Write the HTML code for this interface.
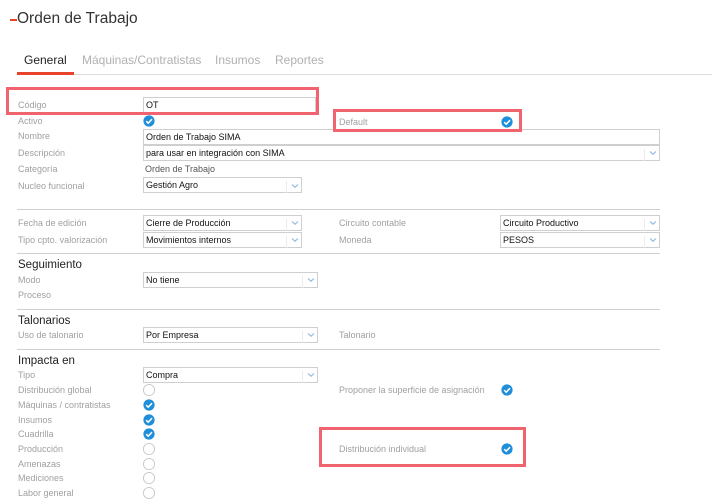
<!DOCTYPE html>
<html><head><meta charset="utf-8"><style>
*{margin:0;padding:0;box-sizing:border-box}
body{width:712px;height:502px;background:#fff;position:relative;overflow:hidden;font-family:"Liberation Sans",sans-serif}
.a{position:absolute;white-space:nowrap}
.l{position:absolute;font-size:9px;color:#a0a0a0;line-height:12px;white-space:nowrap}
.i{position:absolute;border:1px solid #cfcfcf;font-size:9px;color:#111;line-height:14px;padding-left:2px;height:16px;background:#fff;white-space:nowrap}
.s::after{content:"";position:absolute;right:0;top:3px;width:14px;height:12px;border-left:1px solid #ececec}
.h{position:absolute;font-size:11.5px;color:#222;white-space:nowrap}
.sep{position:absolute;left:17px;width:643px;height:1px;background:#d0d0d0}
.rb{position:absolute;border:3px solid #f0636f}
</style></head><body>
<div class="a" style="left:10px;top:19px;width:7px;height:2px;background:#e8442c"></div>
<div class="a" style="left:17px;top:10px;font-size:15.5px;color:#333">Orden de Trabajo</div>

<div class="a" style="left:24px;top:53px;font-size:12px;color:#222">General</div>
<div class="a" style="left:82px;top:53px;font-size:12px;color:#b0b0b0">Máquinas/Contratistas</div>
<div class="a" style="left:215px;top:53px;font-size:12px;color:#b0b0b0">Insumos</div>
<div class="a" style="left:275px;top:53px;font-size:12px;color:#b0b0b0">Reportes</div>
<div class="a" style="left:17px;top:74px;width:695px;height:1px;background:#ddd"></div>
<div class="a" style="left:17px;top:72px;width:57px;height:3px;background:#e8442c"></div>

<div class="l" style="left:18px;top:99px">Código</div>
<div class="i" style="left:143px;top:97px;width:173px">OT</div>
<div class="l" style="left:18px;top:115px">Activo</div>
<div class="l" style="left:339px;top:116px">Default</div>
<div class="l" style="left:18px;top:130px">Nombre</div>
<div class="i" style="left:143px;top:129px;width:517px">Orden de Trabajo SIMA</div>
<div class="l" style="left:18px;top:147px">Descripción</div>
<div class="i s" style="left:143px;top:145px;width:517px">para usar en integración con SIMA</div>
<div class="l" style="left:18px;top:163px">Categoría</div>
<div class="a" style="left:145px;top:163px;font-size:9px;color:#555;line-height:12px">Orden de Trabajo</div>
<div class="l" style="left:18px;top:180px">Nucleo funcional</div>
<div class="i s" style="left:143px;top:177px;width:159px">Gestión Agro</div>

<div class="sep" style="top:209px"></div>
<div class="l" style="left:18px;top:217px">Fecha de edición</div>
<div class="i s" style="left:143px;top:215px;width:159px">Cierre de Producción</div>
<div class="l" style="left:339px;top:217px">Circuito contable</div>
<div class="i s" style="left:500px;top:215px;width:160px">Circuito Productivo</div>
<div class="l" style="left:18px;top:234px">Tipo cpto. valorización</div>
<div class="i s" style="left:143px;top:232px;width:159px">Movimientos internos</div>
<div class="l" style="left:339px;top:234px">Moneda</div>
<div class="i s" style="left:500px;top:232px;width:160px">PESOS</div>

<div class="sep" style="top:253px"></div>
<div class="h" style="left:18px;top:259px">Seguimiento</div>
<div class="l" style="left:18px;top:274px">Modo</div>
<div class="i s" style="left:143px;top:272px;width:175px">No tiene</div>
<div class="l" style="left:18px;top:289px">Proceso</div>

<div class="sep" style="top:309px"></div>
<div class="h" style="left:18px;top:315px">Talonarios</div>
<div class="l" style="left:18px;top:329px">Uso de talonario</div>
<div class="i s" style="left:143px;top:327px;width:175px">Por Empresa</div>
<div class="l" style="left:339px;top:329px">Talonario</div>

<div class="sep" style="top:349px"></div>
<div class="h" style="left:18px;top:355px">Impacta en</div>
<div class="l" style="left:18px;top:369px">Tipo</div>
<div class="i s" style="left:143px;top:367px;width:175px">Compra</div>
<div class="l" style="left:18px;top:384px">Distribución global</div>
<div class="l" style="left:339px;top:384px">Proponer la superficie de asignación</div>
<div class="l" style="left:18px;top:399px">Máquinas / contratistas</div>
<div class="l" style="left:18px;top:414px">Insumos</div>
<div class="l" style="left:18px;top:428px">Cuadrilla</div>
<div class="l" style="left:18px;top:443px">Producción</div>
<div class="l" style="left:339px;top:443px">Distribución individual</div>
<div class="l" style="left:18px;top:458px">Amenazas</div>
<div class="l" style="left:18px;top:472px">Mediciones</div>
<div class="l" style="left:18px;top:487px">Labor general</div>

<div class="rb" style="left:6px;top:87px;width:313px;height:28px"></div>
<div class="rb" style="left:333px;top:109px;width:189px;height:23px"></div>
<div class="rb" style="left:319px;top:427px;width:207px;height:40px"></div>

<svg width="712" height="502" style="position:absolute;left:0;top:0">
<defs>
<g id="ck"><circle r="5.6" fill="#1e8fd8"/><path d="M-2.8 0.2 L-0.8 2.2 L3 -1.8" stroke="#fff" stroke-width="1.5" fill="none"/></g>
<g id="em"><circle r="5.6" fill="#fff" stroke="#c8c8c8" stroke-width="0.9"/></g>
<path id="ar" d="M-3 -1.5 L0 1.2 L3 -1.5" stroke="#8fb8e0" stroke-width="1.1" fill="none"/>
</defs>
<use href="#ck" x="149" y="121"/>
<use href="#ck" x="507" y="122"/>
<use href="#em" x="149" y="390"/>
<use href="#ck" x="507" y="390"/>
<use href="#ck" x="149" y="405"/>
<use href="#ck" x="149" y="420"/>
<use href="#ck" x="149" y="434"/>
<use href="#em" x="149" y="449"/>
<use href="#ck" x="507" y="449"/>
<use href="#em" x="149" y="464"/>
<use href="#em" x="149" y="478"/>
<use href="#em" x="149" y="493"/>
<use href="#ar" x="653" y="153"/>
<use href="#ar" x="295" y="186"/>
<use href="#ar" x="295" y="223"/>
<use href="#ar" x="295" y="240"/>
<use href="#ar" x="653" y="223"/>
<use href="#ar" x="653" y="240"/>
<use href="#ar" x="311" y="280"/>
<use href="#ar" x="311" y="335"/>
<use href="#ar" x="311" y="375"/>
</svg>
</body></html>
